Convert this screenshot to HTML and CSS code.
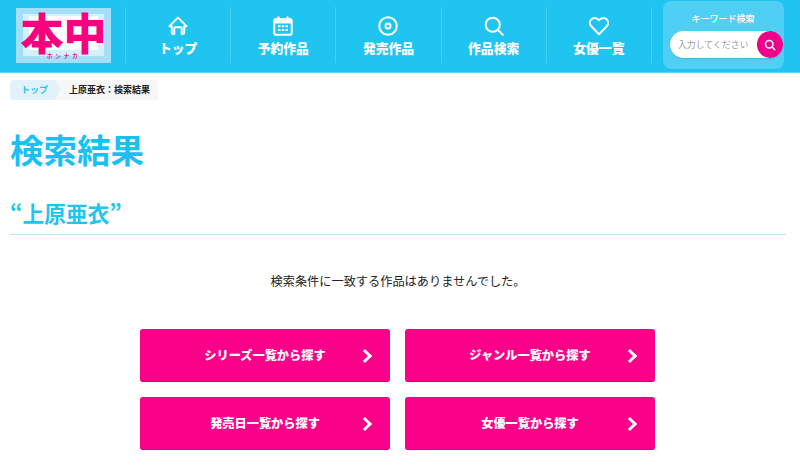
FILE: index.html
```html
<!DOCTYPE html>
<html lang="ja">
<head>
<meta charset="utf-8">
<title>検索結果</title>
<link rel="stylesheet" href="styles.css">
</head>
<body>
<header class="header">
  <a class="logo">
    <span class="logo-inner"><span class="logo-white"></span></span>
    <span class="logo-main">本中</span>
    <span class="logo-sub">ホンナカ</span>
  </a>
  <nav class="nav">
    <a class="nav-item">
      <svg class="nav-icon" viewBox="0 0 24 24"><path d="M7.5 21.5H5.8a1.3 1.3 0 0 1-1.3-1.3v-8H1.8L12 2l10.2 10.2h-2.7v8a1.3 1.3 0 0 1-1.3 1.3h-1.7v-6.5a1.5 1.5 0 0 0-1.5-1.5H9a1.5 1.5 0 0 0-1.5 1.5z"/></svg>
      <span>トップ</span>
    </a>
    <a class="nav-item">
      <svg class="nav-icon" viewBox="0 0 24 24"><rect x="1.5" y="3.5" width="21" height="19" rx="2.5"/><path class="band" d="M1.5 6a2.5 2.5 0 0 1 2.5-2.5h16A2.5 2.5 0 0 1 22.5 6v2.5h-21z"/><path d="M6.5 1.5v3M17.5 1.5v3"/><path class="dots" d="M6 11h3v2.5H6zM10.5 11h3v2.5h-3zM15 11h3v2.5h-3zM6 15.500h3V18H6zM10.5 15.500h3V18h-3zM15 15.500h3V18h-3z"/></svg>
      <span>予約作品</span>
    </a>
    <a class="nav-item">
      <svg class="nav-icon" viewBox="0 0 24 24"><circle cx="12" cy="12" r="10.5"/><circle cx="12" cy="12" r="3"/></svg>
      <span>発売作品</span>
    </a>
    <a class="nav-item">
      <svg class="nav-icon" viewBox="0 0 24 24"><circle cx="10.5" cy="10.5" r="8.5"/><path d="M17 17l5.5 5.5"/></svg>
      <span>作品検索</span>
    </a>
    <a class="nav-item">
      <svg class="nav-icon" viewBox="0 0 24 24"><path d="M12 22L2.8 12.3a5.9 5.9 0 0 1 0-8.2 5.5 5.5 0 0 1 8 0l1.2 1.2 1.2-1.2a5.5 5.5 0 0 1 8 0 5.9 5.9 0 0 1 0 8.2z"/></svg>
      <span>女優一覧</span>
    </a>
  </nav>
  <form class="search">
    <div class="search-title">キーワード検索</div>
    <div class="search-box">
      <span class="search-input">入力してください</span>
      <span class="search-btn"><svg viewBox="0 0 24 24"><circle cx="10.5" cy="10.5" r="7.5"/><path d="M16 16l5.5 5.5"/></svg></span>
    </div>
  </form>
</header>
<ol class="crumbs">
  <li class="crumb-home">トップ</li>
  <li class="crumb-current">上原亜衣：検索結果</li>
</ol>
<main class="main">
  <h1 class="title">検索結果</h1>
  <h2 class="subtitle">“上原亜衣”</h2>
  <p class="message">検索条件に一致する作品はありませんでした。</p>
  <div class="links">
    <a class="link-btn"><span>シリーズ一覧から探す</span></a>
    <a class="link-btn"><span>ジャンル一覧から探す</span></a>
    <a class="link-btn"><span>発売日一覧から探す</span></a>
    <a class="link-btn"><span>女優一覧から探す</span></a>
  </div>
</main>
</body>
</html>
```

FILE: styles.css
```css
* { box-sizing: border-box; }
html, body { margin: 0; padding: 0; }
body {
  background: #fff;
  color: #222;
  font-family: "Noto Sans CJK JP", "Noto Sans", sans-serif;
  overflow: hidden;
  height: 465px;
}
.header {
  height: 73px;
  background: #20c4f0;
  border-bottom: 1px solid #5fd6f5;
  display: flex;
  align-items: flex-start;
  padding-left: 16px;
}
.logo {
  position: relative;
  flex: none;
  width: 95px;
  height: 55px;
  margin-top: 8px;
  background: #a3dff7;
  display: block;
}
.logo-inner {
  position: absolute;
  left: 7px; top: 6px;
  width: 81px; height: 42px;
  background: #d4f0fb;
}
.logo-white {
  position: absolute;
  left: 6px; top: 2px;
  width: 69px; height: 34px;
  background: #fff;
}
.logo-main {
  position: absolute;
  left: 4px; top: 2px;
  width: 87px;
  text-align: center;
  font-size: 43px;
  line-height: 42px;
  font-weight: 900;
  color: #f8007f;
  white-space: nowrap;
}
.logo-sub {
  position: absolute;
  left: 0; right: 0; top: 44px;
  text-align: center;
  font-size: 6px;
  line-height: 8px;
  font-weight: 700;
  letter-spacing: 2.4px;
  color: #f8188f;
}
.nav {
  display: flex;
  margin-left: 14px;
  margin-top: 7px;
  border-left: 1px solid #48cff2;
}
.nav-item {
  width: 105.2px;
  height: 56px;
  border-right: 1px solid #48cff2;
  color: #fff;
  display: flex;
  flex-direction: column;
  align-items: center;
  font-size: 12.8px;
  line-height: 18px;
  font-weight: 900;
  padding-top: 9px;
}
.nav-item span { margin-top: 3px; }
.nav-icon {
  width: 20px; height: 20px;
  fill: none;
  stroke: #fff;
  stroke-width: 2.4;
  stroke-linejoin: round;
  stroke-linecap: round;
  display: block;
}
.nav-icon .band { fill: #fff; stroke-width: 1; }
.nav-icon .dots { fill: #fff; stroke: none; }
.search {
  flex: none;
  width: 121px;
  height: 68px;
  margin: 1px 0 0 11px;
  background: #4ecff3;
  border-radius: 8px;
  padding: 11px 1px 0 7px;
}
.search-title {
  color: #fff;
  font-size: 9px;
  line-height: 13px;
  text-align: center;
  font-weight: 500;
  padding-right: 7px;
}
.search-box {
  margin-top: 6px;
  height: 27px;
  background: #fff;
  border-radius: 14px;
  display: flex;
  align-items: center;
  justify-content: space-between;
  padding-left: 8px;
  box-shadow: 0 1px 1px rgba(0,0,0,.12);
}
.search-input {
  color: #999;
  font-size: 8.7px;
  letter-spacing: 0.2px;
  white-space: nowrap;
}
.search-btn {
  width: 26px; height: 27px;
  border-radius: 50%;
  background: #f0008a;
  display: flex;
  align-items: center;
  justify-content: center;
  flex: none;
}
.search-btn svg {
  width: 12px; height: 12px;
  fill: none;
  stroke: #fff;
  stroke-width: 3;
  stroke-linecap: round;
}
.crumbs {
  list-style: none;
  margin: 7px 0 0 10px;
  padding: 0;
  display: flex;
  height: 20px;
  font-size: 9px;
  line-height: 20px;
  font-weight: 700;
}
.crumb-home {
  position: relative;
  width: 45px;
  padding-left: 11px;
  background: #e3f2fa;
  color: #20c4f0;
  border-radius: 4px 0 0 4px;
  z-index: 1;
  white-space: nowrap;
}
.crumb-home::after {
  content: "";
  position: absolute;
  left: 100%; top: 0;
  border-style: solid;
  border-width: 10px 0 10px 6px;
  border-color: transparent transparent transparent #e3f2fa;
}
.crumb-current {
  padding: 0 8px 0 14px;
  background: #f7f7f7;
  color: #222;
  border-radius: 0 4px 4px 0;
}
.main { padding: 0 14px 0 10px; }
.title {
  margin: 23px 0 0;
  font-size: 33.5px;
  line-height: 52px;
  font-weight: 700;
  color: #17c1f5;
}
.subtitle {
  margin: 19px 0 0;
  font-size: 21.7px;
  line-height: 38px;
  height: 41px;
  font-weight: 700;
  color: #20c4f0;
  border-bottom: 1px solid #b5e9fb;
}
.message {
  margin: 36px 0 0;
  text-align: center;
  font-size: 12.2px;
  line-height: 20px;
  color: #222;
}
.links {
  margin: 38px 0 0 130px;
  width: 515px;
  display: grid;
  grid-template-columns: 250px 250px;
  column-gap: 15px;
  row-gap: 15px;
}
.link-btn {
  position: relative;
  height: 53px;
  background: #fb0088;
  border-bottom: 1px solid #d9007a;
  border-radius: 3px;
  color: #fff;
  font-size: 12.2px;
  font-weight: 900;
  display: flex;
  align-items: center;
  justify-content: center;
}
.link-btn::after {
  content: "";
  position: absolute;
  right: 20px; top: 50%;
  width: 7px; height: 7px;
  margin-top: -4px;
  border-top: 3px solid #fff;
  border-right: 3px solid #fff;
  transform: rotate(45deg);
}
```
